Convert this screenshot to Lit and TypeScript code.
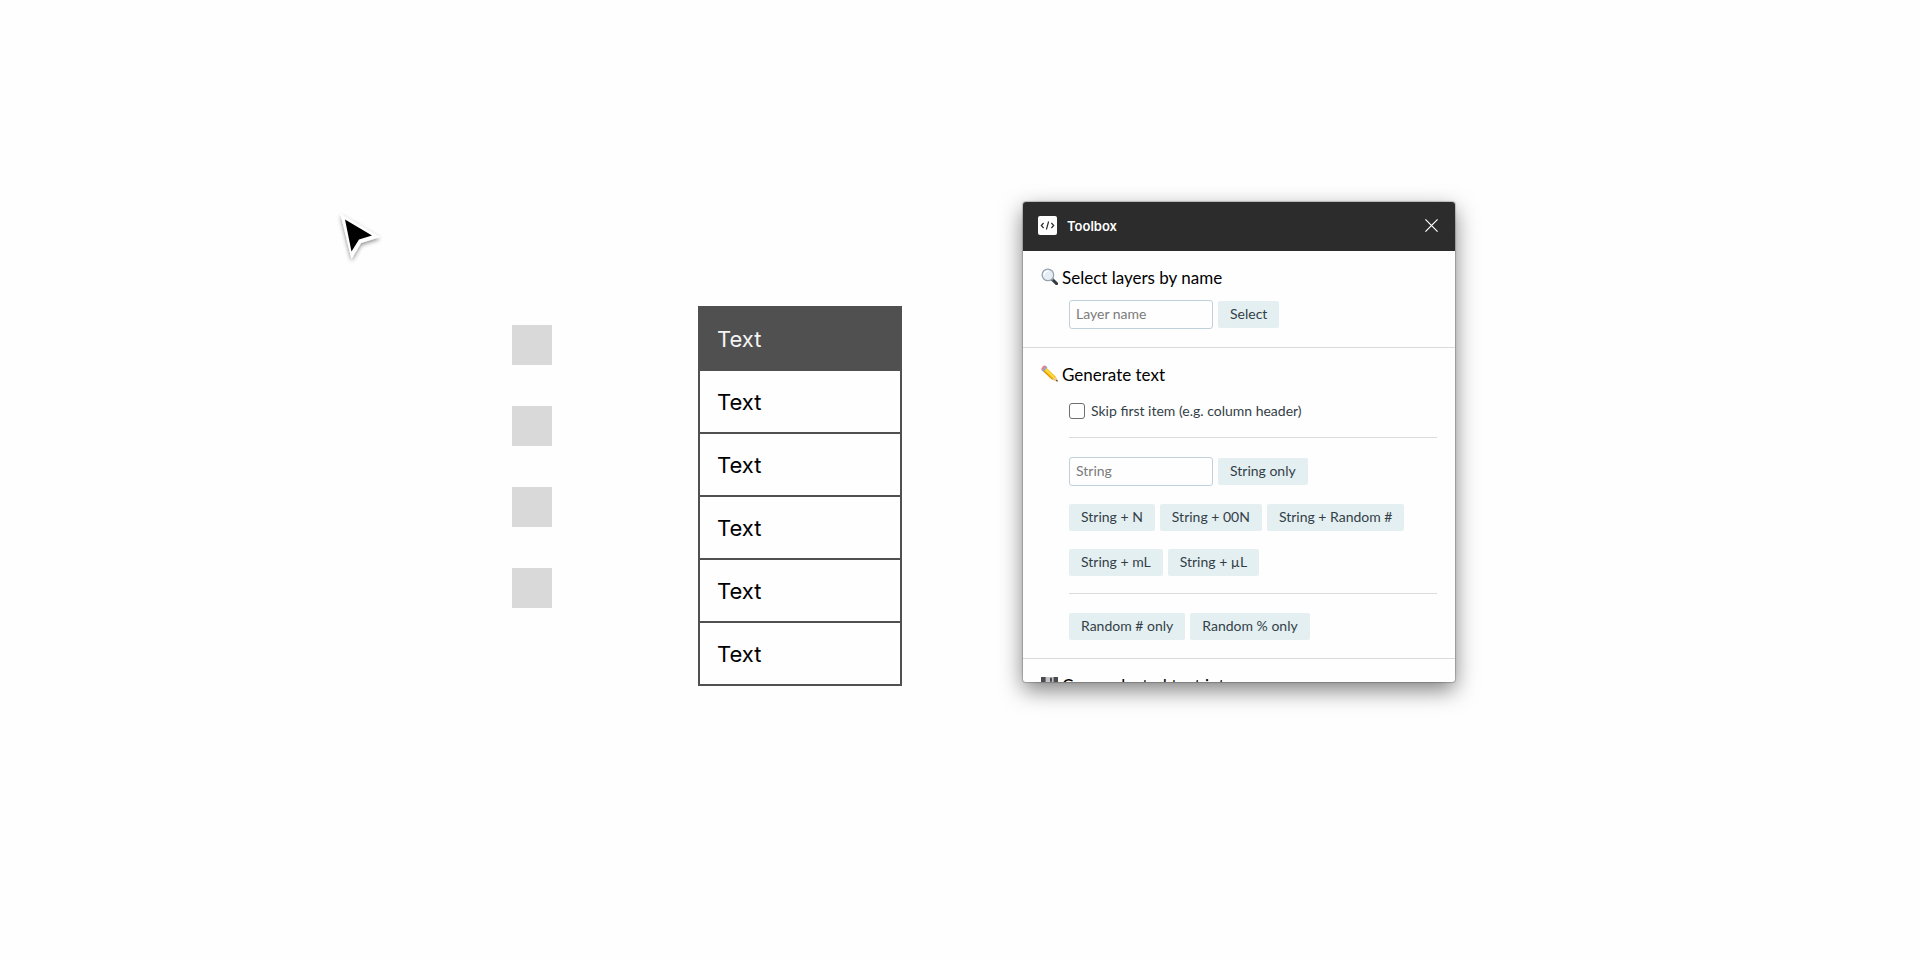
import { LitElement, html, css, svg } from "lit";
import { customElement, property } from "lit/decorators.js";

const magnifier = svg`
  <path d="M11.200 11.400 15.600 15.600" stroke="#343b40" stroke-width="3" stroke-linecap="round"/>
  <path d="M10 10.400 12 12.200" stroke="#8d979d" stroke-width="1.800"/>
  <circle cx="6.900" cy="6.900" r="5.800" fill="#e6edf4" stroke="#94a3b2" stroke-width="1.300"/>
  <path d="M3.200 6.600A3.800 3.800 0 0 1 7 3.100" fill="none" stroke="#fff" stroke-width="1.400" stroke-linecap="round"/>`;

const pencil = svg`
  <path d="M4.600 1.900 14.600 11.400 16.800 16.400 11.200 14.800 1.400 5.400Z" fill="#fbc315"/>
  <path d="M3.400 3.200 13 12.600" stroke="#ffdf55" stroke-width="1.200"/>
  <path d="M2.400 6.400 11.200 14.800 12 14.200 3.200 5.600Z" fill="#dc9410"/>
  <path d="M14.600 11.400 16.800 16.400 11.200 14.800Z" fill="#eccb95"/>
  <path d="M16 14.500 16.900 16.500 14.800 15.900Z" fill="#33302c"/>
  <path d="M6.400 2.300 2.400 7 .6 5.200 4.600.7Z" fill="#8fa6c4"/>
  <path d="M4.900 1 1.100 5.500.5 4.800C-.3 3 2.400.1 4 .4Z" fill="#e97e86"/>`;

const floppy = svg`
  <path d="M0 1h17v16H0Z" fill="#4b4b4f"/>
  <path d="M4.600 1h8v6h-8Z" fill="#c4c4c6"/>
  <path d="M9 1.800h2v4H9Z" fill="#4b4b4f"/>
  <path d="M3 9h11v8H3Z" fill="#e8e8ea"/>`;

@customElement("tool-section")
class ToolSection extends LitElement {
  @property() heading = "";
  @property({ attribute: false }) icon: unknown = null;

  static styles = css`
    :host {
      display: block;
      padding: 15px 18px 18px;
      border-bottom: 1px solid #d9dadb;
    }
    .heading {
      display: flex;
      align-items: center;
      gap: 4px;
      margin: 0 0 10px;
      font-size: 17px;
      line-height: 24px;
      font-weight: 400;
      color: #000;
      white-space: nowrap;
    }
    .icon {
      flex: none;
      width: 17px;
      height: 17px;
      margin-bottom: 3px;
    }
    .body {
      padding-left: 28px;
    }
  `;

  render() {
    return html`
      <h2 class="heading">
        <svg class="icon" viewBox="0 0 17 17" aria-hidden="true">${this.icon}</svg>
        ${this.heading}
      </h2>
      <div class="body"><slot></slot></div>
    `;
  }
}

@customElement("plugin-panel")
class PluginPanel extends LitElement {
  static styles = css`
    :host {
      display: flex;
      flex-direction: column;
      box-sizing: border-box;
      width: 432px;
      height: 480px;
      overflow: hidden;
      border-radius: 3px;
      background: #fefefe;
      box-shadow: 0 0 1px 1px rgba(0, 0, 0, 0.2), 0 8px 22px rgba(0, 0, 0, 0.5);
      font-family: Lato, "Open Sans", sans-serif;
    }
    .bar {
      flex: none;
      display: flex;
      align-items: center;
      gap: 10px;
      box-sizing: border-box;
      height: 49px;
      padding: 0 14px 2px 15px;
      background: #2c2c2c;
      color: #fff;
    }
    .logo {
      width: 19px;
      height: 19px;
    }
    .title {
      flex: 1;
      margin: 0;
      font: 600 13px/20px Inter, sans-serif;
    }
    .close {
      display: grid;
      place-items: center;
      width: 19px;
      height: 19px;
      padding: 0;
      border: 0;
      background: none;
      color: inherit;
    }
    .content {
      flex: 1;
      min-height: 0;
      overflow: hidden;
    }
    .row {
      display: flex;
      align-items: center;
      gap: 5px;
    }
    .row + .row {
      margin-top: 18px;
    }
    .field {
      box-sizing: border-box;
      width: 144px;
      height: 29px;
      padding: 0 6px 2px;
      border: 1px solid #bfd2db;
      border-radius: 3px;
      background: #fefefe;
      font: 14px/20px Lato, sans-serif;
      color: #333f48;
    }
    .field::placeholder {
      color: #7b7b7b;
      opacity: 1;
    }
    .btn {
      height: 27px;
      padding: 0 12px 2px;
      border: 0;
      border-radius: 2px;
      background: #e4eff1;
      font: 14px/20px Lato, sans-serif;
      color: #333f48;
      white-space: nowrap;
    }
    .check {
      display: flex;
      align-items: center;
      gap: 6px;
      padding-top: 4px;
      font-size: 14px;
      line-height: 20px;
      color: #333f48;
    }
    .box {
      appearance: none;
      box-sizing: border-box;
      width: 16px;
      height: 16px;
      margin: 0;
      border: 1px solid #6f6f6f;
      border-radius: 3px;
      background: #fefefe;
    }
    .rule {
      height: 1px;
      margin: 17px 0 19px;
      border: 0;
      background: #d9dbdd;
    }
    .check + .rule {
      margin-top: 16px;
    }
  `;

  private buttons(labels: string[]) {
    return html`<div class="row">
      ${labels.map((l) => html`<button class="btn" type="button">${l}</button>`)}
    </div>`;
  }

  render() {
    return html`
      <header class="bar">
        <svg class="logo" viewBox="0 0 19 19" aria-hidden="true">
          <rect width="19" height="19" rx="2" fill="#fff" />
          <path d="M5.600 7 3.300 9.500 5.600 12M13.400 7l2.300 2.500-2.300 2.500M10.600 5.500 8.400 13.500"
            fill="none" stroke="#2c2c2c" stroke-width="1.200" />
        </svg>
        <h1 class="title">Toolbox</h1>
        <button class="close" type="button" aria-label="Close">
          <svg width="13" height="13" viewBox="0 0 13 13" aria-hidden="true">
            <path d="M.4.4l12.200 12.200M12.600.4.4 12.600" stroke="#fff" stroke-width="1.200" />
          </svg>
        </button>
      </header>
      <div class="content">
        <tool-section heading="Select layers by name" .icon=${magnifier}>
          <div class="row">
            <input class="field" type="text" placeholder="Layer name" aria-label="Layer name" />
            <button class="btn" type="button">Select</button>
          </div>
        </tool-section>
        <tool-section heading="Generate text" .icon=${pencil}>
          <label class="check">
            <input class="box" type="checkbox" />
            Skip first item (e.g. column header)
          </label>
          <hr class="rule" />
          <div class="row">
            <input class="field" type="text" placeholder="String" aria-label="String" />
            <button class="btn" type="button">String only</button>
          </div>
          ${this.buttons(["String + N", "String + 00N", "String + Random #"])}
          ${this.buttons(["String + mL", "String + µL"])}
          <hr class="rule" />
          ${this.buttons(["Random # only", "Random % only"])}
        </tool-section>
        <tool-section heading="Copy selected text into" .icon=${floppy}></tool-section>
      </div>
    `;
  }
}

@customElement("app-root")
class AppRoot extends LitElement {
  static styles = css`
    :host {
      display: grid;
      grid-template-columns: 340fr 40px 132fr 40px 146fr 204px 121fr auto 465fr;
      align-items: start;
      box-sizing: border-box;
      min-height: 100vh;
      padding: 202px 0 40px;
      background: #fefefe;
    }
    .cursor {
      grid-column: 2;
      width: 52px;
      height: 58px;
      margin: 8px -6px 0;
    }
    .squares {
      grid-column: 4;
      display: grid;
      gap: 41px;
      margin-top: 123px;
    }
    .square {
      height: 40px;
      background: #d9d9d9;
    }
    .table {
      grid-column: 6;
      width: 100%;
      margin-top: 104px;
      border-collapse: collapse;
      font: 22px/28px Inter, sans-serif;
      color: #000;
    }
    .cell {
      box-sizing: border-box;
      height: 63px;
      padding: 0 17px;
      border: 2px solid #505050;
      text-align: left;
      font-weight: 400;
    }
    .head {
      background: #505050;
      color: #f4f4f4;
    }
    .panel {
      grid-column: 8;
    }
  `;

  render() {
    return html`
      <svg class="cursor" viewBox="0 0 52 58" aria-hidden="true">
        <defs>
          <filter id="lift" x="-30%" y="-30%" width="160%" height="160%">
            <feDropShadow dx="0" dy="2" stdDeviation="2.200" flood-opacity=".45" />
          </filter>
        </defs>
        <path d="M6.500 4 46 27 27 33 17.500 49Z" fill="#fff" filter="url(#lift)" />
        <path d="M11 9.500 38 25.500 25 29.500 17.500 41.500Z" fill="#000" />
      </svg>
      <div class="squares">
        ${[0, 1, 2, 3].map(() => html`<div class="square"></div>`)}
      </div>
      <table class="table">
        <thead>
          <tr><th class="cell head" scope="col">Text</th></tr>
        </thead>
        <tbody>
          ${[0, 1, 2, 3, 4].map(() => html`<tr><td class="cell">Text</td></tr>`)}
        </tbody>
      </table>
      <plugin-panel class="panel"></plugin-panel>
    `;
  }
}
